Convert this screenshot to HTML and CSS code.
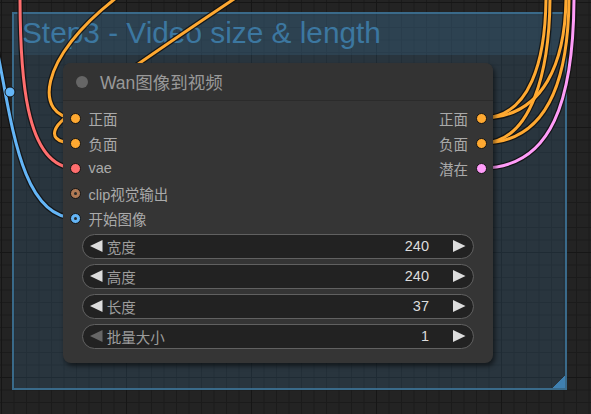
FILE: index.html
```html
<!DOCTYPE html>
<html>
<head>
<meta charset="utf-8">
<link rel="stylesheet" href="styles.css">
</head>
<body>
<div class="canvas">
  <div class="group">
    <div class="group-title">Step3 - Video size &amp; length</div>
    <div class="group-corner"></div>
  </div>

  <svg class="links" width="591" height="414" viewBox="0 0 591 414">
    <g class="outline">
      <path d="M 20 -5 C 20 70, 24 168, 75 168"/>
      <path d="M -8 28 C 10 95, 14 218, 75 218"/>
      <path d="M 120 -5 C 34 60, 36 118, 75 118"/>
      <path d="M 240 -5 C 150 55, 70 110, 58 125 C 50 136, 56 143, 75 143"/>
      <path d="M 482 118 C 530 118, 546 60, 546 -5"/>
      <path d="M 482 118 C 545 118, 566 60, 566 -5"/>
      <path d="M 482 143 C 532 143, 550 70, 550 -5"/>
      <path d="M 482 143 C 548 143, 569 80, 569 -5"/>
      <path d="M 482 168 C 552 168, 574 100, 574 -5"/>
    </g>
    <path class="w red" d="M 20 -5 C 20 70, 24 168, 75 168"/>
    <path class="w blue" d="M -8 28 C 10 95, 14 218, 75 218"/>
    <path class="w orange" d="M 120 -5 C 34 60, 36 118, 75 118"/>
    <path class="w orange" d="M 240 -5 C 150 55, 70 110, 58 125 C 50 136, 56 143, 75 143"/>
    <path class="w orange" d="M 482 118 C 530 118, 546 60, 546 -5"/>
    <path class="w orange" d="M 482 118 C 545 118, 566 60, 566 -5"/>
    <path class="w orange" d="M 482 143 C 532 143, 550 70, 550 -5"/>
    <path class="w orange" d="M 482 143 C 548 143, 569 80, 569 -5"/>
    <path class="w pink" d="M 482 168 C 552 168, 574 100, 574 -5"/>
    <circle cx="10" cy="92" r="5" fill="#64b5f6" stroke="#111" stroke-width="1"/>
  </svg>

  <div class="node">
    <div class="node-title">
      <span class="title-dot"></span>
      <span class="title-text">Wan图像到视频</span>
    </div>
    <div class="node-body">
      <div class="slots">
        <div class="inputs">
          <div class="slot"><span class="dot cond"></span><span>正面</span></div>
          <div class="slot"><span class="dot cond"></span><span>负面</span></div>
          <div class="slot"><span class="dot vae"></span><span>vae</span></div>
          <div class="slot"><span class="dot ring clipv"></span><span>clip视觉输出</span></div>
          <div class="slot"><span class="dot ring image"></span><span>开始图像</span></div>
        </div>
        <div class="outputs">
          <div class="slot"><span>正面</span><span class="dot cond"></span></div>
          <div class="slot"><span>负面</span><span class="dot cond"></span></div>
          <div class="slot"><span>潜在</span><span class="dot latent"></span></div>
        </div>
      </div>
      <div class="widgets">
        <div class="widget">
          <svg class="arrow" viewBox="0 0 12.5 12"><polygon points="0,6 12.5,0 12.5,12"/></svg>
          <span class="w-label">宽度</span>
          <span class="w-value">240</span>
          <svg class="arrow" viewBox="0 0 12.5 12"><polygon points="12.5,6 0,0 0,12"/></svg>
        </div>
        <div class="widget">
          <svg class="arrow" viewBox="0 0 12.5 12"><polygon points="0,6 12.5,0 12.5,12"/></svg>
          <span class="w-label">高度</span>
          <span class="w-value">240</span>
          <svg class="arrow" viewBox="0 0 12.5 12"><polygon points="12.5,6 0,0 0,12"/></svg>
        </div>
        <div class="widget">
          <svg class="arrow" viewBox="0 0 12.5 12"><polygon points="0,6 12.5,0 12.5,12"/></svg>
          <span class="w-label">长度</span>
          <span class="w-value">37</span>
          <svg class="arrow" viewBox="0 0 12.5 12"><polygon points="12.5,6 0,0 0,12"/></svg>
        </div>
        <div class="widget">
          <svg class="arrow disabled" viewBox="0 0 12.5 12"><polygon points="0,6 12.5,0 12.5,12"/></svg>
          <span class="w-label">批量大小</span>
          <span class="w-value">1</span>
          <svg class="arrow" viewBox="0 0 12.5 12"><polygon points="12.5,6 0,0 0,12"/></svg>
        </div>
      </div>
    </div>
  </div>
</div>
</body>
</html>
```

FILE: styles.css
```css
* { box-sizing: border-box; }

html, body {
  margin: 0;
  padding: 0;
  background: #222;
}

body {
  font-family: "Liberation Sans", "Noto Sans CJK SC", sans-serif;
}

.canvas {
  position: relative;
  width: 591px;
  height: 414px;
  overflow: hidden;
  background-color: #232323;
  background-image:
    linear-gradient(to right, #161616 1px, transparent 1px),
    linear-gradient(to bottom, #161616 1px, transparent 1px),
    linear-gradient(to right, #1b1b1b 1px, transparent 1px),
    linear-gradient(to bottom, #1b1b1b 1px, transparent 1px);
  background-size: 125px 125px, 125px 125px, 12.5px 12.5px, 12.5px 12.5px;
  background-position: 1px 2px, 1px 2px, 1px 2px, 1px 2px;
}

/* group */
.group {
  position: absolute;
  left: 12px;
  top: 12px;
  width: 555px;
  height: 378px;
  border: 2px solid rgba(63, 120, 158, 0.8);
  background: rgba(63, 120, 158, 0.22);
}

.group-title {
  height: 41px;
  line-height: 37px;
  padding-left: 8px;
  font-size: 29.8px;
  color: #3c77a0;
  background: rgba(63, 120, 158, 0.2);
  white-space: nowrap;
}

.group-corner {
  position: absolute;
  right: 0;
  bottom: 0;
  width: 12px;
  height: 12px;
  background: linear-gradient(to bottom right, transparent 50%, #3f80b0 50%);
}

/* links */
.links {
  position: absolute;
  left: 0;
  top: 0;
}

.links path {
  fill: none;
  stroke-linecap: round;
}

.outline path {
  stroke: #111;
  stroke-width: 5.5;
  stroke-opacity: 0.85;
}

.w { stroke-width: 3; }
.w.orange { stroke: #ffa931; }
.w.red { stroke: #ff6e6e; }
.w.blue { stroke: #64b5f6; }
.w.pink { stroke: #ff9cf9; }

/* node */
.node {
  position: absolute;
  left: 63px;
  top: 63px;
  width: 430px;
  height: 300px;
  background: #353535;
  border-radius: 8px;
  box-shadow: 2px 3px 5px rgba(0, 0, 0, 0.55);
  display: flex;
  flex-direction: column;
}

.node-title {
  height: 38px;
  display: flex;
  align-items: center;
  padding-left: 12.5px;
  background: #333;
  border-bottom: 1px solid #2b2b2b;
  border-radius: 8px 8px 0 0;
  color: #999;
  font-size: 17.5px;
}

.title-dot {
  width: 12px;
  height: 12px;
  border-radius: 50%;
  background: #666;
  margin-right: 12.5px;
}

.node-body {
  padding-top: 4.5px;
  display: flex;
  flex-direction: column;
}

.slots {
  display: flex;
  justify-content: space-between;
}

.inputs, .outputs {
  display: flex;
  flex-direction: column;
}

.inputs { padding-left: 6.5px; }
.outputs { padding-right: 6px; }

.slot {
  height: 25px;
  display: flex;
  align-items: center;
  gap: 8px;
  color: #aaa;
  font-size: 14.5px;
  white-space: nowrap;
}

.outputs .slot { justify-content: flex-end; }

.dot {
  position: relative;
  width: 11px;
  height: 11px;
  border-radius: 50%;
  border: 1px solid #141414;
  flex: none;
}

.dot.cond { background: #ffa931; }
.dot.vae { background: #ff6e6e; }
.dot.latent { background: #ff9cf9; }
.dot.clipv { background: #b07a55; }
.dot.image { background: #64b5f6; }

.dot.ring::after {
  content: "";
  position: absolute;
  left: 3px;
  top: 3px;
  width: 3px;
  height: 3px;
  border-radius: 50%;
  background: #2a2a2a;
}

.widgets {
  margin-top: 3px;
  padding: 0 18.75px;
  display: flex;
  flex-direction: column;
  gap: 5px;
}

.widget {
  height: 25px;
  display: flex;
  align-items: center;
  padding: 0 7.5px;
  background: #222;
  border: 1px solid #616161;
  border-radius: 12.5px;
  font-size: 14.5px;
  white-space: nowrap;
}

.arrow {
  width: 12.5px;
  height: 12px;
  flex: none;
  fill: #ddd;
}

.arrow.disabled { fill: #666; }

.w-label {
  margin-left: 4px;
  flex: 1;
  color: #9c9c9c;
}

.w-value {
  color: #ddd;
  margin-right: 24.25px;
}
```
